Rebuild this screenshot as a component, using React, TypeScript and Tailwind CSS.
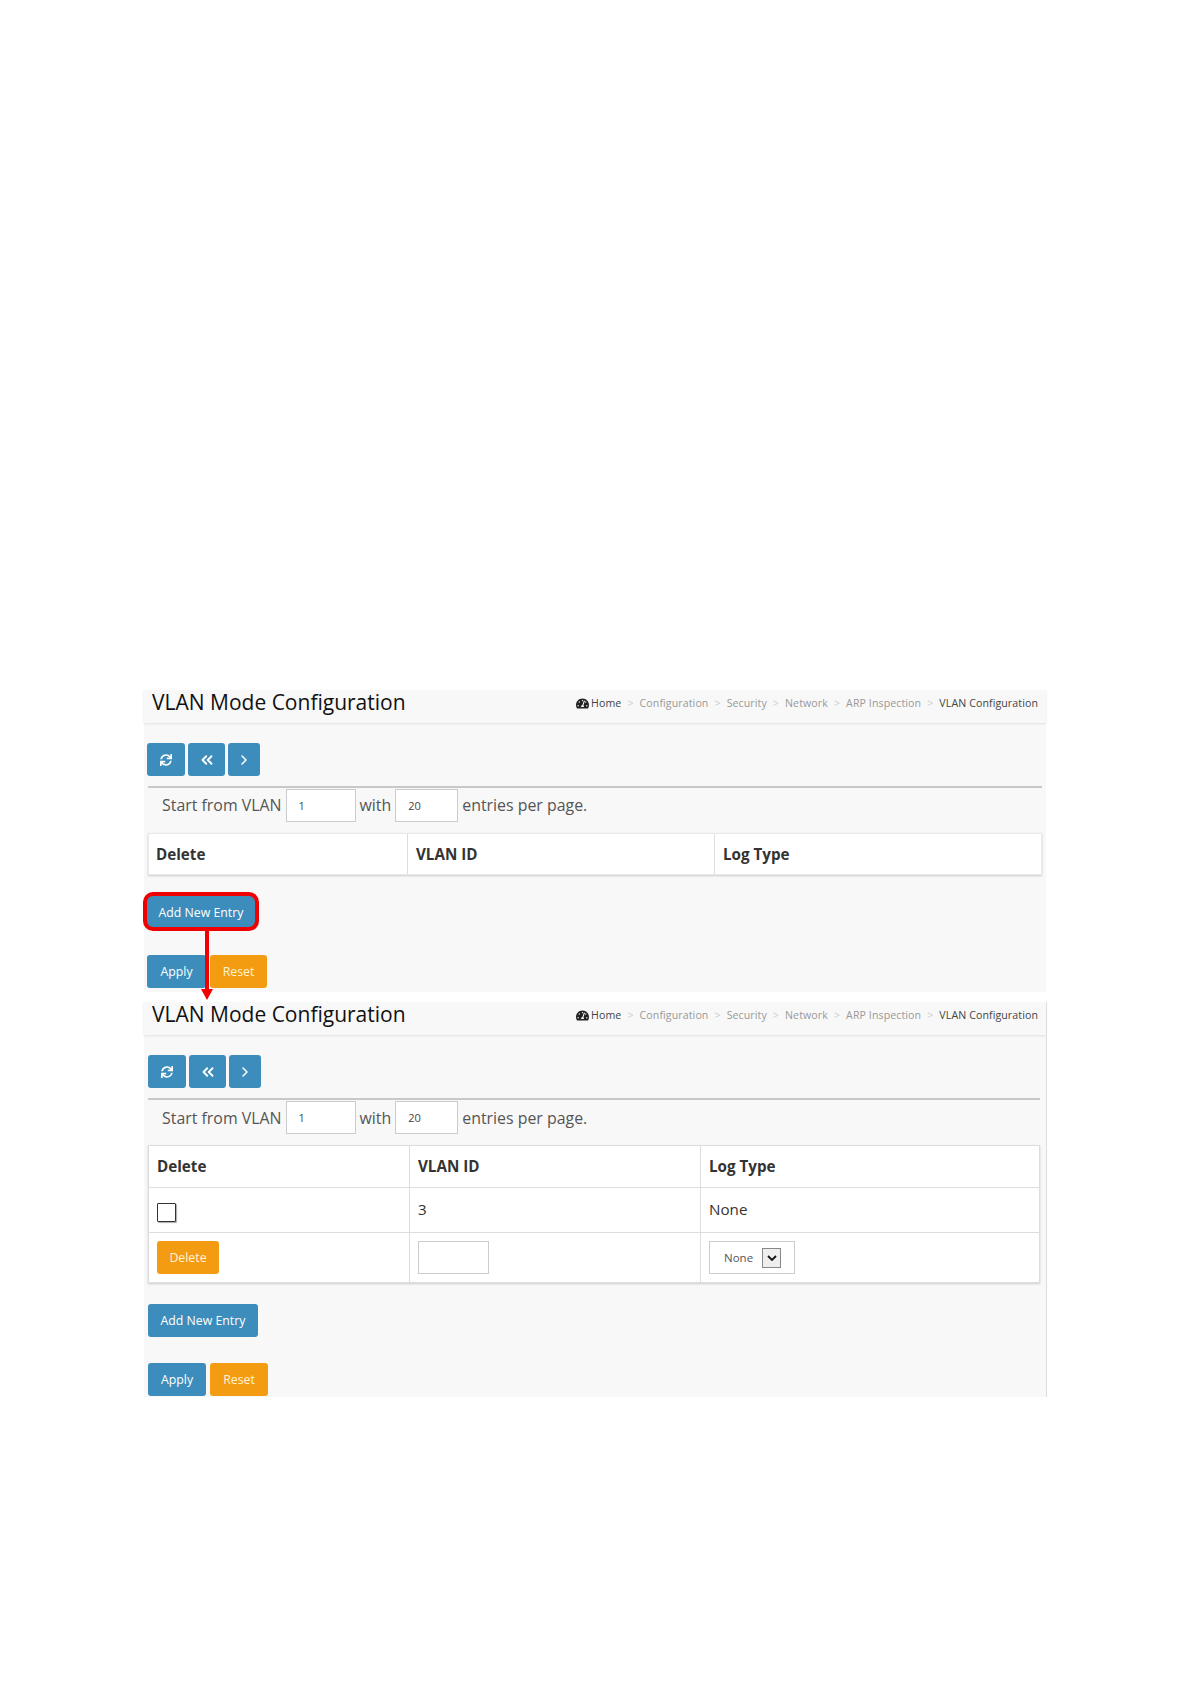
import { ChevronRight, ChevronsLeft } from "lucide-react";
import { FaSync, FaTachometerAlt } from "react-icons/fa";

const crumbs = ["Configuration", "Security", "Network", "ARP Inspection"];

function PageHeader({ gap }: { gap: string }) {
  return (
    <div className="flex h-[33px] items-start justify-between bg-[#f8f8f8] pl-2 pr-2 shadow-[0_1px_2px_#e0e0e0]">
      <h1 className="text-[21px] leading-[24px] text-[#111]">VLAN Mode Configuration</h1>
      <div className={`mt-[6px] flex items-center text-[10.6px] tracking-[0.1px] text-[#999] ${gap}`}>
        <span className="flex items-center gap-[2px] text-[#444]">
          <FaTachometerAlt className="text-[13px] text-[#222]" />
          Home
        </span>
        {crumbs.map((c) => (
          <span key={c} className="flex items-center gap-[6px]">
            <span className="text-[#ccc]">&gt;</span>
            {c}
          </span>
        ))}
        <span className="flex items-center gap-[6px] text-[#444]">
          <span className="text-[#ccc]">&gt;</span>
          VLAN Configuration
        </span>
      </div>
    </div>
  );
}

function BlueButton({ children, className }: { children: React.ReactNode; className: string }) {
  return (
    <button
      type="button"
      className={`flex h-[33px] items-center justify-center rounded-[3px] bg-[#3c8dbc] text-[12.3px] text-white ${className}`}
    >
      {children}
    </button>
  );
}

function OrangeButton({ children, className }: { children: React.ReactNode; className: string }) {
  return (
    <button
      type="button"
      className={`flex h-[33px] items-center justify-center rounded-[3px] bg-[#f39c12] pt-[2px] text-[12.3px] text-[#fff3d6] ${className}`}
    >
      {children}
    </button>
  );
}

function Toolbar() {
  return (
    <div className="flex gap-[3px]">
      <BlueButton className="w-[38px]">
        <FaSync className="text-[12px]" />
      </BlueButton>
      <BlueButton className="w-[37px]">
        <ChevronsLeft size={18} strokeWidth={2.5} className="mt-[1px]" />
      </BlueButton>
      <BlueButton className="w-[32px]">
        <ChevronRight size={16} strokeWidth={2.25} className="mt-[1px]" />
      </BlueButton>
    </div>
  );
}

function PagerRow({ textTop }: { textTop: string }) {
  return (
    <div className="flex h-[47px] items-start border-t-2 border-[#c8c8c8] pt-[1px] pl-[14px] text-[15.9px] text-[#555]">
      <span className={textTop}>Start from VLAN</span>
      <span className="ml-[4px] h-[33px] w-[70px] border border-[#ccc] bg-white pl-[12px] text-[11px] leading-[31px] text-[#444]">
        1
      </span>
      <span className={`ml-[4px] ${textTop}`}>with</span>
      <span className="ml-[4px] h-[33px] w-[63px] border border-[#ccc] bg-white pl-[12px] text-[11px] leading-[31px] text-[#444]">
        20
      </span>
      <span className={`ml-[4px] ${textTop}`}>entries per page.</span>
    </div>
  );
}

function Panel1() {
  return (
    <section className="relative ml-[144px] h-[302px] w-[902px] bg-[#f8f8f8]">
      <PageHeader gap="gap-[6px]" />
      <div className="ml-[3px] mt-[20px]">
        <Toolbar />
      </div>
      <div className="ml-[4px] mr-[4px] mt-[10px]">
        <PagerRow textTop="mt-[5px]" />
        <div className="flex h-[42px] border border-[#e8e8e8] bg-white text-[15.2px] font-bold text-[#333] shadow-[0_1px_2px_#ccc]">
          <div className="flex w-[259px] items-center border-r border-[#ddd] pl-[7px]">Delete</div>
          <div className="flex w-[307px] items-center border-r border-[#ddd] pl-[8px]">VLAN ID</div>
          <div className="flex flex-1 items-center pl-[8px]">Log Type</div>
        </div>
      </div>
      <div className="ml-[3px] mt-[21px] w-[108px] rounded-[6px] outline-[4px] outline-[#f00000]">
        <BlueButton className="w-[108px] !h-[31px] pt-[3px]">Add New Entry</BlueButton>
      </div>
      <div className="ml-[3px] mt-[28px] flex gap-[4px]">
        <BlueButton className="w-[59px] pt-[2px]">Apply</BlueButton>
        <OrangeButton className="w-[57px]">Reset</OrangeButton>
      </div>
      {/* arrow from the Add New Entry button down to the next screen */}
      <div className="absolute left-[61px] top-[240px] h-[61px] w-[4px] bg-[#f00000]" />
      <div className="absolute left-[57px] top-[299px] h-0 w-0 border-x-[6px] border-t-[11px] border-x-transparent border-t-[#f00000]" />
    </section>
  );
}

function Panel2() {
  return (
    <section className="ml-[144px] mt-[10px] h-[395px] w-[903px] border-r border-[#ddd] bg-[#f8f8f8]">
      <PageHeader gap="gap-[6px]" />
      <div className="ml-[4px] mt-[20px]">
        <Toolbar />
      </div>
      <div className="ml-[4px] mr-[6px] mt-[10px]">
        <PagerRow textTop="mt-[6px]" />
        <table className="w-full table-fixed border-collapse bg-white text-[15.2px] text-[#333] shadow-[0_1px_2px_#ccc]">
          <colgroup>
            <col className="w-[261px]" />
            <col className="w-[291px]" />
            <col />
          </colgroup>
          <tbody>
            <tr className="h-[42px] font-bold">
              <td className="border border-[#ddd] pl-[8px]">Delete</td>
              <td className="border border-[#ddd] pl-[8px]">VLAN ID</td>
              <td className="border border-[#ddd] pl-[8px]">Log Type</td>
            </tr>
            <tr className="h-[45px]">
              <td className="border border-[#ddd] pl-[8px]">
                <div className="mt-[5px] h-[19px] w-[19px] rounded-[1px] border border-[#333] bg-white shadow-[1px_1px_1px_#aaa]" />
              </td>
              <td className="border border-[#ddd] pb-[2px] pl-[8px]">3</td>
              <td className="border border-[#ddd] pb-[2px] pl-[8px]">None</td>
            </tr>
            <tr className="h-[50px]">
              <td className="border border-[#ddd] pl-[8px]">
                <OrangeButton className="w-[62px]">Delete</OrangeButton>
              </td>
              <td className="border border-[#ddd] pl-[8px]">
                <div className="h-[33px] w-[71px] border border-[#ccc] bg-white" />
              </td>
              <td className="border border-[#ddd] pl-[8px]">
                <div className="flex h-[33px] w-[86px] items-center border border-[#ccc] bg-white pl-[14px] text-[11.5px] text-[#555]">
                  None
                  <span className="ml-[9px] flex h-[20px] w-[19px] items-center justify-center border border-[#888] bg-[#eee]">
                    <svg viewBox="0 0 10 6" className="h-[6px] w-[10px]">
                      <path d="M1 1l4 4 4-4" fill="none" stroke="#111" strokeWidth="1.8" />
                    </svg>
                  </span>
                </div>
              </td>
            </tr>
          </tbody>
        </table>
      </div>
      <div className="ml-[4px] mt-[21px]">
        <BlueButton className="w-[110px] pt-[2px]">Add New Entry</BlueButton>
      </div>
      <div className="ml-[4px] mt-[26px] flex gap-[4px]">
        <BlueButton className="w-[58px] pt-[2px]">Apply</BlueButton>
        <OrangeButton className="w-[58px]">Reset</OrangeButton>
      </div>
    </section>
  );
}

export default function App() {
  return (
    <div className="min-h-[1684px] bg-white pt-[690px] font-['Open_Sans',sans-serif]">
      <Panel1 />
      <Panel2 />
    </div>
  );
}
